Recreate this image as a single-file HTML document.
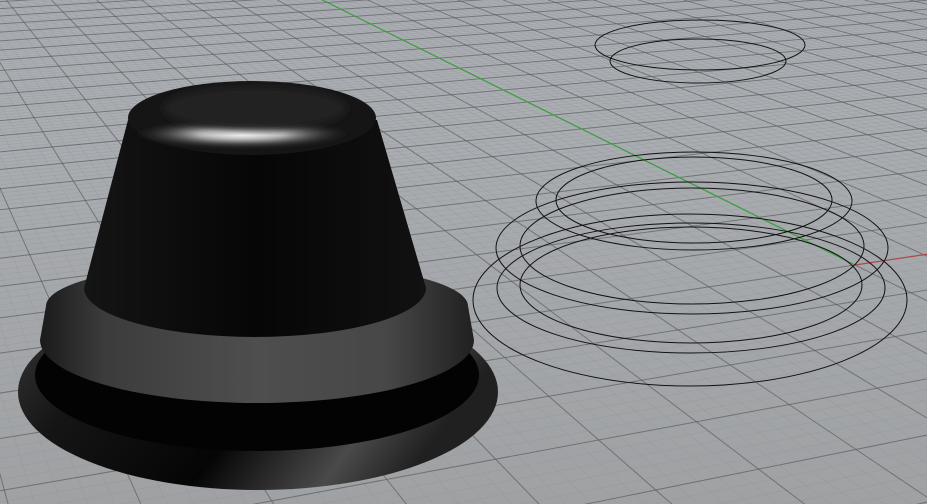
<!DOCTYPE html>
<html><head><meta charset="utf-8"><style>
html,body{margin:0;padding:0;width:927px;height:504px;overflow:hidden;background:#a4a7aa}
svg{display:block;overflow:hidden;position:absolute;left:0;top:0}
</style></head><body>
<svg id="s" width="927" height="504" viewBox="0 0 927 504" xmlns="http://www.w3.org/2000/svg">
<defs>
<linearGradient id="bg" x1="0" y1="0" x2="0" y2="1">
<stop offset="0" stop-color="#adb1b5"/><stop offset="1" stop-color="#9fa1a3"/></linearGradient>
<linearGradient id="flange" x1="0" y1="0" x2="1" y2="0.3">
<stop offset="0" stop-color="#3a3a3a"/><stop offset="0.25" stop-color="#151515"/><stop offset="0.6" stop-color="#050505"/><stop offset="0.85" stop-color="#4a4a4a"/><stop offset="1" stop-color="#202020"/></linearGradient>
<linearGradient id="band" x1="0" y1="0" x2="1" y2="0">
<stop offset="0" stop-color="#1a1a1a"/><stop offset="0.15" stop-color="#3c3c3c"/><stop offset="0.5" stop-color="#4e4e4e"/><stop offset="0.8" stop-color="#474747"/><stop offset="1" stop-color="#202020"/></linearGradient>
<linearGradient id="cone" x1="0" y1="0" x2="1" y2="0">
<stop offset="0" stop-color="#141414"/><stop offset="0.5" stop-color="#060606"/><stop offset="1" stop-color="#111"/></linearGradient>
<radialGradient id="hl" cx="0.5" cy="0.5" r="0.5">
<stop offset="0" stop-color="#fff"/><stop offset="0.4" stop-color="#bbb"/><stop offset="1" stop-color="#222" stop-opacity="0"/></radialGradient>
<filter id="bl"><feGaussianBlur stdDeviation="2"/></filter>
<filter id="bl4"><feGaussianBlur stdDeviation="4"/></filter>
</defs>
<rect width="927" height="504" fill="url(#bg)"/>
<g id="grid"></g>
<g id="obj">
<ellipse cx="258" cy="392" rx="240" ry="98" fill="url(#flange)"/>
<ellipse cx="257" cy="375" rx="222" ry="76" fill="#030303"/>
<path d="M40 340 L46 306 A211 45 0 0 1 468 306 L474 340 A217 63 0 0 1 40 340 Z" fill="url(#band)"/>
<path d="M128 120 L84 288 A171 49 0 0 0 426 288 L377 120 Z" fill="url(#cone)"/>
<ellipse cx="252" cy="118" rx="124" ry="37" fill="#151515"/>
<ellipse cx="242" cy="134" rx="110" ry="14" fill="url(#hl)" filter="url(#bl)"/>
<ellipse cx="255" cy="108" rx="92" ry="22" fill="#222" filter="url(#bl4)"/>
</g>
<g fill="none" stroke="#111" stroke-width="1">
<ellipse cx="700" cy="45" rx="105" ry="25"/>
<ellipse cx="698" cy="61" rx="88" ry="22"/>
<ellipse cx="694" cy="201" rx="158" ry="49"/>
<ellipse cx="694" cy="200" rx="138" ry="43"/>
<ellipse cx="692" cy="248" rx="196" ry="66"/>
<ellipse cx="692" cy="246" rx="172" ry="58"/>
<ellipse cx="690" cy="300" rx="217" ry="86"/>
<ellipse cx="691" cy="288" rx="194" ry="65"/>
<ellipse cx="691" cy="285" rx="171" ry="58"/>
</g>
</svg>
<script>
(function(){
var O=[855,265],VA=[-200,-260],VB=[4360,-260],a=0.05,b=0.02;
function P(u,v){var w=1+a*u+b*v;var x=(O[0]+a*u*VA[0]+b*v*VB[0])/w;var y=(O[1]+a*u*VA[1]+b*v*VB[1])/w;return [x,y];}
var g=document.getElementById('grid'),s='';
function line(p,q,c,wd){s+='<line x1="'+p[0].toFixed(1)+'" y1="'+p[1].toFixed(1)+'" x2="'+q[0].toFixed(1)+'" y2="'+q[1].toFixed(1)+'" stroke="'+c+'" stroke-width="'+wd+'"/>';}
var wmin=0.03;
for(var i=-1000;i<=1000;i++){
 var t=i/5,major=(i%5===0);
 var c=major?'rgba(90,92,96,0.7)':'rgba(140,146,156,0.4)',wd=major?1:0.6;
 var ulo=(wmin-1-b*t)/a;
 line(P(ulo,t),P(4000,t),c,wd);
 var vlo=(wmin-1-a*t)/b;
 line(P(t,vlo),P(t,10000),c,wd);
}
line(P(0,0),P(4000,0),'#3da03d',1.2);
line(P(0,0),P(0,10000),'#b04a4a',1.2);
g.innerHTML=s;
})();
</script>
</body></html>
